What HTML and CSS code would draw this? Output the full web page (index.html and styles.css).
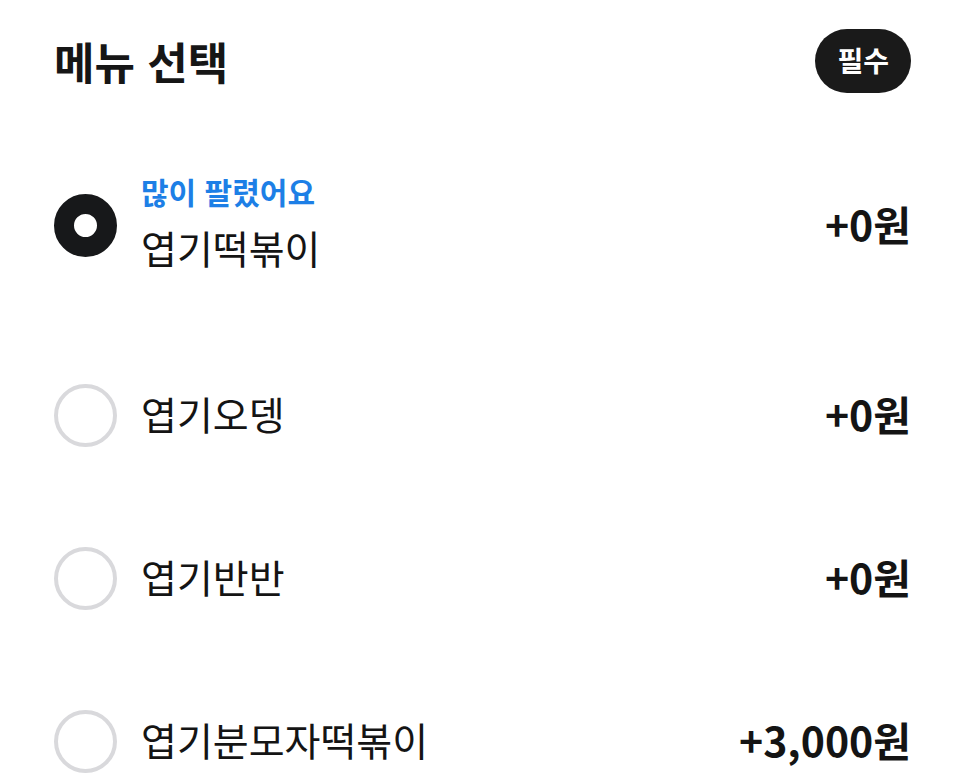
FILE: index.html
```html
<!DOCTYPE html>
<html lang="ko">

<head>
    <meta charset="UTF-8">
    <meta name="viewport" content="width=device-width, initial-scale=1.0">
    <title>메뉴 선택</title>
    <link rel="stylesheet" href="styles.css">
</head>

<body>
    <div class="menu-select">
        <!-- Header -->
        <div class="menu-header">
            <h2>메뉴 선택</h2>
            <span class="badge">필수</span>
        </div>

        <!-- Options -->
        <div class="option featured">
            <span class="radio checked"></span>
            <div class="option-text">
                <span class="tag">많이 팔렸어요</span>
                <span class="name">엽기떡볶이</span>
            </div>
            <span class="price">+0원</span>
        </div>

        <div class="option">
            <span class="radio"></span>
            <div class="option-text">
                <span class="name">엽기오뎅</span>
            </div>
            <span class="price">+0원</span>
        </div>

        <div class="option">
            <span class="radio"></span>
            <div class="option-text">
                <span class="name">엽기반반</span>
            </div>
            <span class="price">+0원</span>
        </div>

        <div class="option">
            <span class="radio"></span>
            <div class="option-text">
                <span class="name">엽기분모자떡볶이</span>
            </div>
            <span class="price">+3,000원</span>
        </div>
    </div>
</body>

</html>
```

FILE: styles.css
```css
body {
    font-family: "Noto Sans CJK KR", "Noto Sans", sans-serif;
    background-color: #ffffff;
    color: #141414;
    margin: 0;
    overflow: hidden;
}

.menu-select {
    padding: 0 55px 0 54px;
}

.menu-header {
    display: flex;
    justify-content: space-between;
    align-items: center;
    padding: 29px 0 24px;
}

h2 {
    margin: 0;
    font-size: 44px;
    font-weight: 700;
    line-height: 64px;
    color: #161616;
}

.badge {
    background: #1a1a1a;
    color: #ffffff;
    font-size: 28px;
    font-weight: 700;
    height: 64px;
    line-height: 62px;
    padding: 0 22px;
    border-radius: 32px;
}

.option {
    display: flex;
    align-items: center;
    min-height: 163px;
}

.option.featured {
    min-height: 217px;
}

.radio {
    width: 63px;
    height: 63px;
    box-sizing: border-box;
    border: 4px solid #d9d9dc;
    border-radius: 50%;
    flex-shrink: 0;
}

.radio.checked {
    border: 20px solid #17181a;
}

.option-text {
    flex: 1;
    display: flex;
    flex-direction: column;
    margin-left: 24px;
    padding-bottom: 6px;
}

.tag {
    color: #1d7fe6;
    font-size: 30px;
    font-weight: 700;
    line-height: 36px;
    margin-bottom: 12px;
}

.name {
    font-size: 39px;
    line-height: 52px;
}

.price {
    font-size: 41px;
    font-weight: 700;
    padding-bottom: 6px;
}
```
